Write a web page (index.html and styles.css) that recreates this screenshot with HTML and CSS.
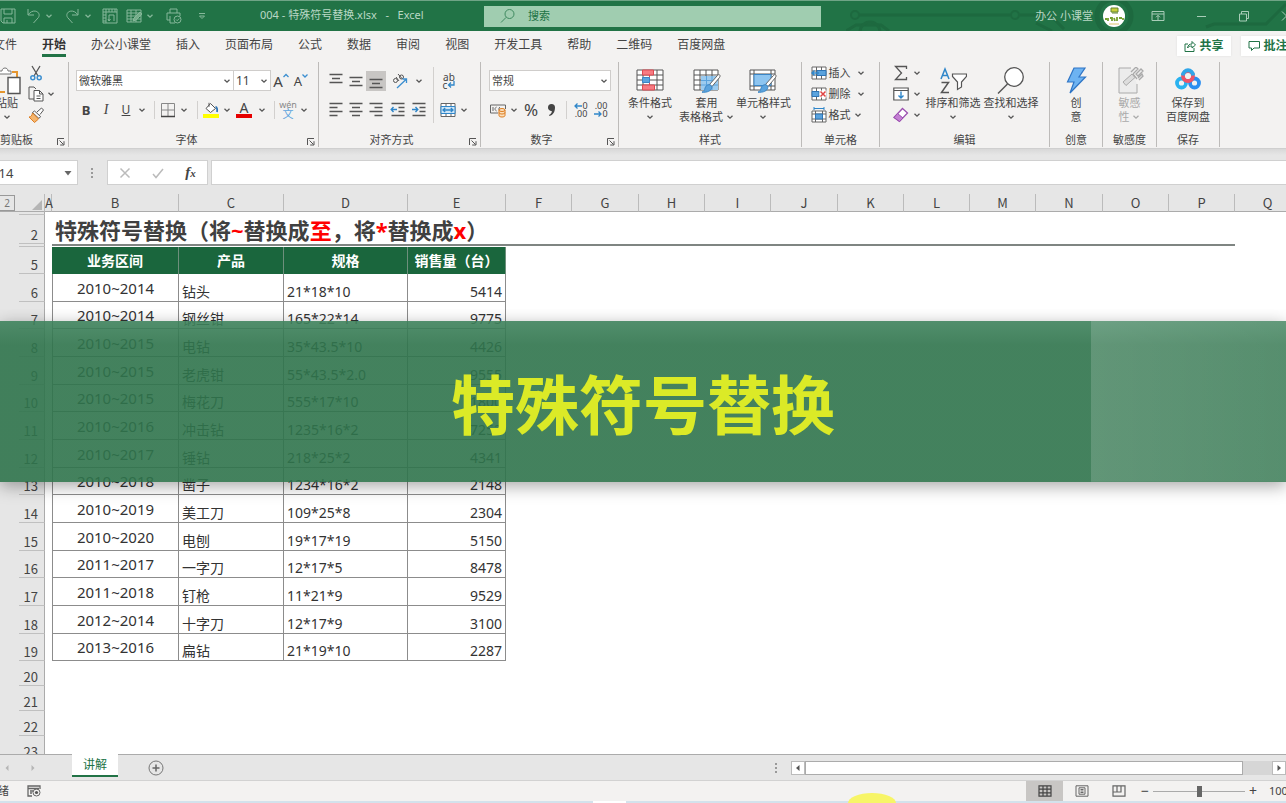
FILE: index.html
```html
<!DOCTYPE html>
<html lang="zh-CN">
<head>
<meta charset="utf-8">
<title>004 - 特殊符号替换.xlsx - Excel</title>
<link rel="stylesheet" href="styles.css">
</head>
<body>
<svg class="sprite" aria-hidden="true">
  <symbol id="chev" viewBox="0 0 8 8"><path d="M1.500 2.800 4 5.200 6.500 2.800" fill="none" stroke="currentColor" stroke-width="1.300"/></symbol>
  <symbol id="launch" viewBox="0 0 8 8"><path d="M.5 7V.5H7M2.500 2.500 6.500 6.500M7 3.200V7H3.200" fill="none" stroke="currentColor"/></symbol>
  <symbol id="brush" viewBox="0 0 20 20"><path d="M18.500.8c1 .8.5 2-.2 3L11 12.500 8.500 10.500 16 2c.8-1 1.700-1.800 2.500-1.200Z" fill="#fff" stroke="#666"/><path d="M8.300 10.700c1.600.2 2.800 1.400 2.500 3-.4 3-4.500 5-9.800 4.500 2-1 2.500-2 3-4 .5-2 2.200-3.600 4.300-3.500Z" fill="#5ba3dd" stroke="#3b86c6"/></symbol>
</svg>

<header class="titlebar">
  <svg class="circuit" viewBox="0 0 440 30" aria-hidden="true"><g fill="none" stroke="#1d693f" stroke-width="3"><path d="M12 14h152M174 14h30l14 14M0 30l10-6h25l8 6M360 26l8-3h52l20-20M190 22l16 8"/><circle cx="9" cy="14" r="4" stroke-width="2"/><circle cx="169" cy="14" r="4" stroke-width="2"/><circle cx="24" cy="31" r="10"/><circle cx="268" cy="15" r="17" stroke-width="5"/></g></svg>
  <div class="quick">
    <button class="w16" aria-label="保存"><svg viewBox="0 0 16 16"><path d="M1 1h14v14H3l-2-2ZM4 1v5h8V1M4 15v-5h8v5M7 12v3"/></svg></button>
    <button class="w20 undo" aria-label="撤销"><svg viewBox="0 0 16 16"><path d="M2 1v6h6M2.300 6.700C4 4 7 2.500 9.800 3.200c3 .8 4.300 3.800 2.600 6.300L7.500 15"/></svg></button>
    <button class="w12" aria-label="撤销列表"><svg class="c"><use href="#chev"/></svg></button>
    <button class="w20 redo" aria-label="恢复"><svg viewBox="0 0 16 16"><path d="M14 1v6H8M13.700 6.700C12 4 9 2.500 6.200 3.200c-3 .8-4.300 3.800-2.600 6.300L8.500 15"/></svg></button>
    <button class="w12" aria-label="恢复列表"><svg class="c"><use href="#chev"/></svg></button>
    <button class="w24" aria-label="表格"><svg viewBox="0 0 16 16"><path d="M1 1h14v14H1ZM1 4h14M4 1v14M7 1v3M10 1v3M13 1v3M1 7h3M1 10h3M1 13h3M7 13l-1-2M7 13l1.500-2M7 13V7h5M12 7v6"/></svg></button>
    <button class="w20" aria-label="编辑表格"><svg viewBox="0 0 16 16"><path d="M1 2h14v12H1ZM1 5h14M1 8h14M1 11h14M5 2v12M10 2v12"/><path d="m7 13 1-3 6-6 2 2-6 6Z" fill="#75ad8a"/></svg></button>
    <button class="w12" aria-label="编辑列表"><svg class="c"><use href="#chev"/></svg></button>
    <button class="w28" aria-label="打印预览"><svg viewBox="0 0 16 16"><path d="M4 5V1h7v4M4 12H1V5h13v3M4 8v7h5"/><circle cx="11.500" cy="11.500" r="3.500"/><path d="m10 11.500 1.200 1.200 2-2.200"/></svg></button>
    <button class="w24" aria-label="自定义快速访问工具栏"><svg class="s8" viewBox="0 0 8 8"><path d="M1 1.500h6M1.500 4h5L4 6.500Z"/></svg></button>
  </div>
  <h1 class="doc-title">004 - 特殊符号替换.xlsx&nbsp;&nbsp; -&nbsp;&nbsp; Excel</h1>
  <label class="search"><svg viewBox="0 0 16 16"><circle cx="9.500" cy="6" r="4.500"/><path d="M6.200 9.300 1 14.500"/></svg><input type="search" placeholder="搜索" aria-label="搜索"></label>
  <div class="account">
    <span>办公 小课堂</span>
    <svg class="avatar" viewBox="0 0 22 22"><circle cx="11" cy="11" r="11" fill="#fff"/><path d="M8 3h7v4H8ZM9 8h6" fill="#c8cf3c" stroke="#62842f"/><path d="M2 14h2m1-1v3m2-3h2v3m2-3 1 3m2-4v4m2-3h3m1 0v2" stroke="#76a02e" stroke-width="1.800" fill="none"/><path d="M6 19h10" stroke="#dcc36a"/></svg>
    <button class="win" aria-label="功能区显示选项"><svg viewBox="0 0 14 12"><path d="M1 1.500h12v9H1ZM1 4h12M7 10V5.500M5 7.300 7 5.300l2 2"/></svg></button>
    <button class="win" aria-label="最小化"><svg viewBox="0 0 14 12"><path d="M3 6.500h9"/></svg></button>
    <button class="win" aria-label="向下还原"><svg viewBox="0 0 14 12"><path d="M2.500 4h7v7h-7ZM4.500 4V1.500h7v7h-2"/></svg></button>
    <button class="win" aria-label="关闭"><svg viewBox="0 0 14 12"><path d="m2 1.500 9 9M11 1.500l-9 9"/></svg></button>
  </div>
</header>

<nav class="tabs">
  <a href="#">文件</a><a href="#" class="on">开始</a><a href="#">办公小课堂</a><a href="#">插入</a><a href="#">页面布局</a><a href="#">公式</a><a href="#">数据</a><a href="#">审阅</a><a href="#">视图</a><a href="#">开发工具</a><a href="#">帮助</a><a href="#">二维码</a><a href="#">百度网盘</a>
  <div class="share">
    <button><svg viewBox="0 0 12 12"><path d="M4 4H1v7.500h9V8M3.500 8c.5-3 2-4 4.500-4V1.500L11.500 5 8 8V6C6 6 4.500 6.500 3.500 8Z"/></svg>共享</button>
    <button><svg viewBox="0 0 12 12"><path d="M1 1.500h10.500v6.500H6L3.500 10.500V8H1Z"/></svg>批注</button>
  </div>
</nav>

<section class="ribbon">
  <div class="group g-clip">
    <div class="body">
      <button class="big paste"><svg class="i28" viewBox="0 0 28 28"><path d="M5 5H1v20h11M19 5h5v5" fill="none" stroke="#e5962f" stroke-width="2"/><path d="M6 7V4h3c0-4 6-4 6 0h3v3Z" fill="#fff" stroke="#777"/><path d="M15 10.500h12v16H15Z" fill="#fff" stroke="#555" stroke-width="1.400"/></svg><span>粘贴</span><svg class="c"><use href="#chev"/></svg></button>
      <div class="stack">
        <div class="row"><button class="w16" aria-label="剪切"><svg viewBox="0 0 16 16"><path d="m4 1 6 10M12 1 6 11" fill="none" stroke="#555" stroke-width="1.300"/><g fill="none" stroke="#3c8fd0" stroke-width="1.500"><circle cx="4.800" cy="12.800" r="2"/><circle cx="11.200" cy="12.800" r="2"/></g></svg></button></div>
        <div class="row"><button class="w16" aria-label="复制"><svg viewBox="0 0 16 16"><path d="M6 13H1V1h5l2 2" fill="none" stroke="#555"/><path d="M6 4.500h5.500L15 8v7H6ZM11.500 4.500V8H15M8.500 10h4M8.500 12.500h4" fill="#fff" stroke="#555"/></svg></button><button class="w14" aria-label="复制选项"><svg class="c"><use href="#chev"/></svg></button></div>
        <div class="row"><button class="w16" aria-label="格式刷"><svg viewBox="0 0 16 16"><path d="m9 5 4.500-4L15.500 3 12 7.500" fill="#fff" stroke="#555"/><path d="m6.500 4 6 5.500-1.500 2L4.500 5.500Z" fill="#fff" stroke="#555"/><path d="m4.500 6 6 6-4 3.500L1 10c2 0 3-1.500 3.500-4Z" fill="#f5b56d" stroke="#dd7d20"/></svg></button></div>
      </div>
    </div>
    <h2>剪贴板</h2><button class="launch" aria-label="剪贴板设置"><svg><use href="#launch"/></svg></button>
  </div>

  <div class="group g-font">
    <div class="body lines">
      <div class="row">
        <label class="combo font-name"><select aria-label="字体"><option>微软雅黑</option></select><svg class="c"><use href="#chev"/></svg></label>
        <label class="combo font-size"><select aria-label="字号"><option>11</option></select><svg class="c"><use href="#chev"/></svg></label>
        <button class="w20 grow" aria-label="增大字号"><span class="l15">A</span><svg class="s6" viewBox="0 0 6 6"><path d="M.5 4 3 1.500 5.500 4" stroke="#3c8fd0" fill="none" stroke-width="1.300"/></svg></button>
        <button class="w20 grow" aria-label="减小字号"><span class="l13">A</span><svg class="s6" viewBox="0 0 6 6"><path d="M.5 1.500 3 4 5.500 1.500" stroke="#3c8fd0" fill="none" stroke-width="1.300"/></svg></button>
      </div>
      <div class="row">
        <button class="w20 bold">B</button><button class="w20 italic">I</button><button class="w20 under">U</button><button class="w12" aria-label="下划线选项"><svg class="c"><use href="#chev"/></svg></button><i class="sep w12"></i>
        <button class="w16" aria-label="边框"><svg viewBox="0 0 16 16"><path d="M1.500 1.500h13v13M1.500 1.500v13M8 1.500v13M1.500 8h13" fill="none" stroke="#888"/><path d="M1 14.500h14" stroke="#444" stroke-width="1.500"/></svg></button><button class="w16" aria-label="边框选项"><svg class="c"><use href="#chev"/></svg></button><i class="sep w10"></i>
        <button class="w18" aria-label="填充颜色"><svg viewBox="0 0 16 16"><path d="m7.500 1.500 5 5-5 4-4.500-4ZM6 .8v4" fill="#fff" stroke="#555"/><path d="M12.500 5c1.500 0 2 2 1.500 5" stroke="#2f75b5" stroke-width="1.800" fill="none"/><path d="M0 12h16v4H0Z" fill="#ffff00"/></svg></button><button class="w14" aria-label="填充选项"><svg class="c"><use href="#chev"/></svg></button>
        <button class="w20 fcolor" aria-label="字体颜色"><span>A</span></button><button class="w16" aria-label="字体颜色选项"><svg class="c"><use href="#chev"/></svg></button><i class="sep w8"></i>
        <button class="w20 pinyin" aria-label="显示拼音"><span>wén</span><b>文</b></button><button class="w12" aria-label="拼音选项"><svg class="c"><use href="#chev"/></svg></button>
      </div>
    </div>
    <h2>字体</h2><button class="launch" aria-label="字体设置"><svg><use href="#launch"/></svg></button>
  </div>

  <div class="group g-align">
    <div class="body">
      <div class="lines w100">
        <div class="row">
          <button class="w20" aria-label="顶端对齐"><svg viewBox="0 0 16 16"><path d="M1.500 1.500h13M4 5.500h8M1.500 9.500h13" stroke="#555" stroke-width="1.300"/></svg></button>
          <button class="w20" aria-label="垂直居中"><svg viewBox="0 0 16 16"><path d="M1.500 4.500h13M4 8.500h8M1.500 12.500h13" stroke="#555" stroke-width="1.300"/></svg></button>
          <button class="w20 pressed" aria-label="底端对齐"><svg viewBox="0 0 16 16"><path d="M1.500 6.500h13M4 10.500h8M1.500 14.500h13" stroke="#555" stroke-width="1.300"/></svg></button>
          <button class="w28" aria-label="方向"><svg viewBox="0 0 16 16"><g fill="none" stroke="#555"><circle cx="3.500" cy="7.500" r="2"/><path d="m4 4 3 4M6 1l4.500 5"/><circle cx="9.500" cy="4" r="2"/></g><path d="M5 15 14.500 6M10.500 6h4v4" stroke="#3c8fd0" stroke-width="1.300" fill="none"/></svg></button><button class="w10" aria-label="方向选项"><svg class="c"><use href="#chev"/></svg></button>
        </div>
        <div class="row">
          <button class="w20" aria-label="左对齐"><svg viewBox="0 0 16 16"><path d="M1.500 1.500h13M1.500 5.500h8M1.500 9.500h13M1.500 13.500h8" stroke="#555" stroke-width="1.300"/></svg></button>
          <button class="w20" aria-label="居中"><svg viewBox="0 0 16 16"><path d="M1.500 1.500h13M4 5.500h8M1.500 9.500h13M4 13.500h8" stroke="#555" stroke-width="1.300"/></svg></button>
          <button class="w20" aria-label="右对齐"><svg viewBox="0 0 16 16"><path d="M1.500 1.500h13M6.500 5.500h8M1.500 9.500h13M6.500 13.500h8" stroke="#555" stroke-width="1.300"/></svg></button>
          <button class="w24" aria-label="减少缩进量"><svg viewBox="0 0 16 16"><path d="M1.500 1.500h13M8.500 5.500h6M8.500 9.500h6M1.500 13.500h13" stroke="#555" stroke-width="1.300"/><path d="M7 7.500H1.500M3.500 5l-2.300 2.500 2.300 2.500" stroke="#2f86c9" stroke-width="1.400" fill="none"/></svg></button>
          <button class="w18" aria-label="增加缩进量"><svg viewBox="0 0 16 16"><path d="M1.500 1.500h13M8.500 5.500h6M8.500 9.500h6M1.500 13.500h13" stroke="#555" stroke-width="1.300"/><path d="M1 7.500h5.500M4.500 5l2.300 2.500-2.300 2.500" stroke="#2f86c9" stroke-width="1.400" fill="none"/></svg></button>
        </div>
      </div>
      <i class="sep tall w14"></i>
      <div class="lines">
        <div class="row"><button class="w18 wrap" aria-label="自动换行"><span>ab</span><span>c<svg viewBox="0 0 8 8"><path d="M7 0v4H1.500M4 1.500 1.500 4 4 6.500" fill="none" stroke="#2f86c9" stroke-width="1.300"/></svg></span></button></div>
        <div class="row"><button class="w16" aria-label="合并后居中"><svg viewBox="0 0 16 16"><path d="M1 1.500h14v13H1ZM6 1.500v3M11 1.500v3M6 11.500v3M11 11.500v3" fill="#fff" stroke="#666"/><path d="M1 4.500h14v7H1Z" fill="#cfe6f7" stroke="#2f86c9"/><path d="M3 8h10M5.200 6 3 8l2.200 2M10.800 6 13 8l-2.200 2" stroke="#2f86c9" fill="none" stroke-width="1.300"/></svg></button><button class="w16" aria-label="合并选项"><svg class="c"><use href="#chev"/></svg></button></div>
      </div>
    </div>
    <h2>对齐方式</h2><button class="launch" aria-label="对齐设置"><svg><use href="#launch"/></svg></button>
  </div>

  <div class="group g-num">
    <div class="body lines">
      <div class="row"><label class="combo num-format"><select aria-label="数字格式"><option>常规</option></select><svg class="c"><use href="#chev"/></svg></label></div>
      <div class="row">
        <button class="w18" aria-label="会计数字格式"><svg viewBox="0 0 16 16"><path d="M8 11H.5V3h15v4M3 5v4M6.500 5C4.500 6 4.500 8 6.500 9M10 5c-1.500 1-1.500 3 0 4" fill="none" stroke="#666"/><g fill="#fbe0bd" stroke="#dd7d20"><path d="M9 8v5.500c0 2 6 2 6 0V8"/><ellipse cx="12" cy="8" rx="3" ry="1.500"/><path d="M9 10.500c0 2 6 2 6 0" fill="none"/></g></svg></button><button class="w14" aria-label="会计格式选项"><svg class="c"><use href="#chev"/></svg></button>
        <button class="w20 pct">%</button><button class="w20" aria-label="千位分隔样式"><svg viewBox="0 0 16 16"><path d="M5 5.500a3.500 3.500 0 1 1 7 0c0 4.500-2 7.500-5.500 8.500L6 13c2-1 2.900-2.300 2.800-4A3.400 3.400 0 0 1 5 5.500Z" fill="#444"/></svg></button><i class="sep w10"></i>
        <button class="w20 dec" aria-label="增加小数位数"><span><svg viewBox="0 0 8 6"><path d="M8 3H1M3.500.5 1 3l2.500 2.500" fill="none" stroke="#2f86c9" stroke-width="1.300"/></svg>0</span><span>.00</span></button>
        <button class="w20 dec" aria-label="减少小数位数"><span>.00</span><span><svg viewBox="0 0 8 6"><path d="M0 3h7M4.500.5 7 3 4.500 5.500" fill="none" stroke="#2f86c9" stroke-width="1.300"/></svg>0</span></button>
      </div>
    </div>
    <h2>数字</h2><button class="launch" aria-label="数字设置"><svg><use href="#launch"/></svg></button>
  </div>

  <div class="group g-style">
    <div class="body">
      <button class="big"><svg class="i28" viewBox="0 0 28 28"><path d="M1 3h26v20H1ZM1 8h26M1 13h26M1 18h26M7 3v20M21 3v20" fill="#fff" stroke="#555"/><path d="M6.500 3h11v5h-11ZM6.500 18h12v5h-12Z" fill="#f77b82" stroke="#df4a52"/><path d="M13.500 8v10" stroke="#df4a52"/><path d="M6.500 10.500h7v5h-7Z" fill="#5ba3dd" stroke="#3b86c6"/></svg><span>条件格式</span><svg class="c"><use href="#chev"/></svg></button>
      <button class="big"><svg class="i28" viewBox="0 0 28 28"><path d="M1 3h24v20H1ZM1 8h24M1 13h24M1 18h24M7 3v20M13 3v20M19 3v20" fill="#fff" stroke="#555"/><path d="M8 9h17v14H8Z" fill="#9ccbef"/><path d="M8 13.500h17M8 18h17M13.500 9v14M19 9v14" stroke="#5ba3dd"/><use href="#brush" x="8" y="7" width="20" height="20"/></svg><span>套用</span><span>表格格式 <svg class="c"><use href="#chev"/></svg></span></button>
      <button class="big"><svg class="i28" viewBox="0 0 28 28"><path d="M1 3h25v20H1ZM1 7h25M1 19h25M5 3v20M22 3v20" fill="#fff" stroke="#555"/><path d="M5 7.500h17v11H5Z" fill="#8ec5f0" stroke="#3b86c6"/><use href="#brush" x="8" y="7" width="20" height="20"/></svg><span>单元格样式</span><svg class="c"><use href="#chev"/></svg></button>
    </div>
    <h2>样式</h2>
  </div>

  <div class="group g-cells">
    <div class="body"><div class="stack">
      <div class="row"><button class="cmd"><svg viewBox="0 0 16 16"><path d="M1 2h14v12H1ZM1 6h14M1 10h14M5.500 2v12M10.500 2v12" fill="#fff" stroke="#666"/><path d="M6 5.500h9v5H6Z" fill="#5ba3dd" stroke="#2f75b5"/><path d="M8 8H1M3.500 5.500 1 8l2.500 2.500" fill="none" stroke="#2f86c9" stroke-width="1.400"/></svg>插入</button><button class="w20" aria-label="插入选项"><svg class="c"><use href="#chev"/></svg></button></div>
      <div class="row"><button class="cmd"><svg viewBox="0 0 16 16"><path d="M1 2h14v12H1ZM1 6h14M1 10h14M5.500 2v12M10.500 2v12" fill="#fff" stroke="#666"/><path d="M1 5.500h7v5H1Z" fill="#5ba3dd" stroke="#2f75b5"/><path d="M8.500 4.500h7v7h-7Z" fill="#fff"/><path d="m9.500 5.500 5 5M14.500 5.500l-5 5" stroke="#e04343" stroke-width="1.500"/></svg>删除</button><button class="w20" aria-label="删除选项"><svg class="c"><use href="#chev"/></svg></button></div>
      <div class="row"><button class="cmd"><svg viewBox="0 0 16 16"><path d="M1 4h14v11H1ZM1 7h14M1 12h14M4.500 4v11M11.500 4v11" fill="#fff" stroke="#666"/><path d="M4.500 7h7v5h-7Z" fill="#5ba3dd" stroke="#2f75b5"/><path d="M3 1.500h10M3 0v3M13 0v3" stroke="#2f86c9"/></svg>格式</button><button class="w14" aria-label="格式选项"><svg class="c"><use href="#chev"/></svg></button></div>
    </div></div>
    <h2>单元格</h2>
  </div>

  <div class="group g-edit">
    <div class="body"><div class="stack">
      <div class="row"><button class="w20" aria-label="自动求和"><svg viewBox="0 0 16 16"><path d="M13.500 4V1.500h-11L8.500 8l-6 6.500h11V12" fill="none" stroke="#555" stroke-width="1.300"/></svg></button><button class="w12" aria-label="求和选项"><svg class="c"><use href="#chev"/></svg></button></div>
      <div class="row"><button class="w20" aria-label="填充"><svg viewBox="0 0 16 16"><path d="M.8 2h14.400v12H.8ZM.8 4.500h14.400" fill="#fff" stroke="#555" stroke-width="1.200"/><path d="M8 5.500v6.500M5.500 9.500 8 12l2.500-2.500" fill="none" stroke="#2f86c9" stroke-width="1.400"/></svg></button><button class="w12" aria-label="填充选项"><svg class="c"><use href="#chev"/></svg></button></div>
      <div class="row"><button class="w20" aria-label="清除"><svg viewBox="0 0 16 16"><path d="m9.500 1.500 5 4.500-8 8.500-5.500-4Z" fill="#fff" stroke="#9b4fb0" stroke-width="1.300"/><path d="m4.500 6.500 5.500 4.500-3.500 3.500L1 10.500Z" fill="#c37fd3" stroke="#9b4fb0"/></svg></button><button class="w12" aria-label="清除选项"><svg class="c"><use href="#chev"/></svg></button></div>
    </div>
      <button class="big"><svg class="i28" viewBox="0 0 28 28"><path d="M2 12 6 2l4 10M3.500 8.500h5" fill="none" stroke="#2f86c9" stroke-width="1.500"/><path d="M2.500 15.500h7l-7 10h7.500" fill="none" stroke="#555" stroke-width="1.500"/><path d="M13.500 7h14v2.500L22.500 15v5l-4 2.500V15l-5-5.500Z" fill="#fff" stroke="#555" stroke-width="1.200"/></svg><span>排序和筛选</span><svg class="c"><use href="#chev"/></svg></button>
      <button class="big"><svg class="i28" viewBox="0 0 28 28"><circle cx="17" cy="10" r="9.300" fill="#fff" stroke="#555" stroke-width="1.300"/><path d="M10.500 17 1 26.500" stroke="#555" stroke-width="1.500"/></svg><span>查找和选择</span><svg class="c"><use href="#chev"/></svg></button>
    </div>
    <h2>编辑</h2>
  </div>

  <div class="group g-idea">
    <div class="body"><button class="big"><svg class="i28" viewBox="0 0 28 28"><path d="M12 1h11l-6 9h6.500L8 26l4-11H5.500Z" fill="#6db3f2" stroke="#2f75c5" stroke-width="1.200"/></svg><span>创</span><span>意</span></button></div>
    <h2>创意</h2>
  </div>
  <div class="group g-sens">
    <div class="body"><button class="big" disabled><svg class="i28" viewBox="0 0 28 28"><path d="M15 1H3v25h18v-9" fill="#ececec" stroke="#aaa"/><path d="m7 15 9-8 3 3.500-9 8Z" fill="#ddd" stroke="#aaa"/><path d="m20 7 5-5 2 2-5 5ZM15 5l5-5 2 2-5 5M22 11l4-4 1 2-4 4M17 7l4 5" fill="#ececec" stroke="#aaa" stroke-width="1.300"/></svg><span>敏感</span><span>性 <svg class="c"><use href="#chev"/></svg></span></button></div>
    <h2>敏感度</h2>
  </div>
  <div class="group g-save">
    <div class="body"><button class="big"><svg class="i28" viewBox="0 0 28 28"><g fill="none" stroke-width="3.800"><circle cx="7.500" cy="16" r="4.500" stroke="#29b2ef"/><circle cx="20.500" cy="16" r="4.500" stroke="#2b8ef0"/><circle cx="14" cy="9" r="5" stroke="#ef5467"/><path d="M8.800 8.500C9.500 1.500 18.500 1.500 19.200 8.500" stroke="#2fa6ea"/></g></svg><span>保存到</span><span>百度网盘</span></button></div>
    <h2>保存</h2>
  </div>
</section>

<section class="formula">
  <label class="namebox"><input type="text" value="J14" aria-label="名称框"><svg viewBox="0 0 8 8"><path d="M.5 2h7L4 6.500Z" fill="#666"/></svg></label>
  <span class="dots"></span>
  <div class="fx">
    <button aria-label="取消"><svg viewBox="0 0 12 12"><path d="m1.500 1.500 9 9M10.500 1.500l-9 9" stroke="#bbb" stroke-width="1.500"/></svg></button>
    <button aria-label="输入"><svg viewBox="0 0 12 12"><path d="m1 7 3 3.500L11 2" fill="none" stroke="#bbb" stroke-width="1.500"/></svg></button>
    <button class="fn">f<small>x</small></button>
  </div>
  <input class="fbar" type="text" aria-label="编辑栏">
</section>

<main class="sheet">
<table>
  <colgroup><col class="cg"><col class="cn"><col class="ca"><col class="cb"><col class="cc"><col class="cd"><col class="ce"><col class="cx"><col class="cy"><col class="cx"><col class="cx"><col class="cy"><col class="cx"><col class="cx"><col class="cx"><col class="cy"><col class="cx"><col class="cx"><col class="cx"></colgroup>
  <thead><tr><td class="level"><button>2</button></td><td class="corner"><svg viewBox="0 0 10 10"><path d="M10 0v10H0Z" fill="#b5b5b5"/></svg></td><th>A</th><th>B</th><th>C</th><th>D</th><th>E</th><th>F</th><th>G</th><th>H</th><th>I</th><th>J</th><th>K</th><th>L</th><th>M</th><th>N</th><th>O</th><th>P</th><th>Q</th></tr></thead>
  <tbody class="top">
    <tr class="thin"><td rowspan="4" class="gutter"></td><th></th></tr>
    <tr class="title"><th>2</th><td></td><td colspan="15">特殊符号替换（将<em>~</em>替换成<em>至</em>，将<em>*</em>替换成<em>x</em>）</td></tr>
    <tr class="thin rule"><th></th><td></td><td colspan="15"></td></tr>
    <tr class="heads"><th>5</th><td></td><td>业务区间</td><td>产品</td><td>规格</td><td>销售量（台）</td></tr>
  </tbody>
  <tbody class="data">
    <tr><td class="gutter"></td><th>6</th><td></td><td class="span">2010~2014</td><td>钻头</td><td>21*18*10</td><td class="num">5414</td></tr>
    <tr><td class="gutter"></td><th>7</th><td></td><td class="span">2010~2014</td><td>钢丝钳</td><td>165*22*14</td><td class="num">9775</td></tr>
    <tr><td class="gutter"></td><th>8</th><td></td><td class="span">2010~2015</td><td>电钻</td><td>35*43.5*10</td><td class="num">4426</td></tr>
    <tr><td class="gutter"></td><th>9</th><td></td><td class="span">2010~2015</td><td>老虎钳</td><td>55*43.5*2.0</td><td class="num">9555</td></tr>
    <tr><td class="gutter"></td><th>10</th><td></td><td class="span">2010~2015</td><td>梅花刀</td><td>555*17*10</td><td class="num">1800</td></tr>
    <tr><td class="gutter"></td><th>11</th><td></td><td class="span">2010~2016</td><td>冲击钻</td><td>1235*16*2</td><td class="num">7252</td></tr>
    <tr><td class="gutter"></td><th>12</th><td></td><td class="span">2010~2017</td><td>锤钻</td><td>218*25*2</td><td class="num">4341</td></tr>
    <tr><td class="gutter"></td><th>13</th><td></td><td class="span">2010~2018</td><td>凿子</td><td>1234*16*2</td><td class="num">2148</td></tr>
    <tr><td class="gutter"></td><th>14</th><td></td><td class="span">2010~2019</td><td>美工刀</td><td>109*25*8</td><td class="num">2304</td></tr>
    <tr><td class="gutter"></td><th>15</th><td></td><td class="span">2010~2020</td><td>电刨</td><td>19*17*19</td><td class="num">5150</td></tr>
    <tr><td class="gutter"></td><th>16</th><td></td><td class="span">2011~2017</td><td>一字刀</td><td>12*17*5</td><td class="num">8478</td></tr>
    <tr><td class="gutter"></td><th>17</th><td></td><td class="span">2011~2018</td><td>钉枪</td><td>11*21*9</td><td class="num">9529</td></tr>
    <tr><td class="gutter"></td><th>18</th><td></td><td class="span">2012~2014</td><td>十字刀</td><td>12*17*9</td><td class="num">3100</td></tr>
    <tr><td class="gutter"></td><th>19</th><td></td><td class="span">2013~2016</td><td>扁钻</td><td>21*19*10</td><td class="num">2287</td></tr>
  </tbody>
  <tbody class="blank">
    <tr><td class="gutter" rowspan="4"></td><th>20</th></tr><tr><th>21</th></tr><tr><th>22</th></tr><tr><th>23</th></tr>
  </tbody>
</table>
</main>

<section class="sheetbar">
  <button class="nav" aria-label="上一张"><svg viewBox="0 0 8 8"><path d="M5.500 1v6L2.500 4Z" fill="#b5b5b5"/></svg></button>
  <button class="nav" aria-label="下一张"><svg viewBox="0 0 8 8"><path d="M2.500 1v6l3-3Z" fill="#b5b5b5"/></svg></button>
  <a class="sheettab" href="#">讲解</a>
  <button class="add" aria-label="新工作表"><svg viewBox="0 0 16 16"><circle cx="8" cy="8" r="7" fill="none" stroke="#777"/><path d="M8 4.500v7M4.500 8h7" stroke="#666" stroke-width="1.500"/></svg></button>
  <span class="dots"></span>
  <div class="hscroll"><button aria-label="向左滚动"><svg viewBox="0 0 8 8"><path d="M5.500 1v6L2 4Z" fill="#555"/></svg></button><span class="thumb"></span><button class="right" aria-label="向右滚动"><svg viewBox="0 0 8 8"><path d="M2.500 1v6L6 4Z" fill="#555"/></svg></button></div>
</section>

<footer class="status">
  <span class="ready">就绪</span>
  <svg class="macro" viewBox="0 0 14 12"><path d="M5 11H1V1h12v3M1 3.500h11M3 6h3M3 8h2" fill="none" stroke="#666" stroke-width="1.300"/><circle cx="9.500" cy="7.500" r="3.500" fill="none" stroke="#666"/><circle cx="9.500" cy="7.500" r="1.600" fill="#555"/></svg>
  <div class="views">
    <button class="on" aria-label="普通"><svg viewBox="0 0 14 12"><path d="M1 .8h12v10.400H1ZM1 4.200h12M1 7.800h12M5 .8v10.400M9 .8v10.400" fill="none" stroke="#444" stroke-width="1.200"/></svg></button>
    <button aria-label="页面布局"><svg viewBox="0 0 14 12"><path d="M1 .8h12v10.400H1ZM4 2.800h6v6.400H4ZM5.500 4.500h3M5.500 6h3M5.500 7.500h3" fill="none" stroke="#666"/></svg></button>
    <button aria-label="分页预览"><svg viewBox="0 0 14 12"><path d="M1 .8h12v10.400H1ZM1 7h8V.8M5 .8V7" fill="none" stroke="#666" stroke-width="1.200"/></svg></button>
  </div>
  <button class="zoom">−</button><input type="range" min="10" max="190" value="100" aria-label="显示比例"><button class="zoom">+</button>
  <span class="percent">100%</span>
  <span class="glow"></span>
</footer>
<div class="edge"></div>

<div class="banner"><strong>特殊符号替换</strong></div>
</body>
</html>
```

FILE: styles.css
```css
* { box-sizing: border-box; }
body {
  margin: 0;
  height: 100vh;
  position: relative;
  display: flex;
  flex-direction: column;
  overflow: hidden;
  background: #e6e6e6;
  color: #444;
  font: 11px/14px "Noto Sans", "Noto Sans CJK SC", sans-serif;
}
button, input, select { font: inherit; color: inherit; margin: 0; }
button {
  display: flex;
  align-items: center;
  justify-content: center;
  flex: none;
  padding: 0;
  border: 0;
  background: none;
}
a { color: inherit; text-decoration: none; }
h1, h2 { margin: 0; font: inherit; white-space: nowrap; }
.sprite { position: absolute; width: 0; height: 0; }
svg { width: 16px; height: 16px; flex: none; }
svg.c { width: 8px; height: 8px; color: #555; }
.w8 { width: 8px; } .w10 { width: 10px; } .w12 { width: 12px; } .w14 { width: 14px; }
.w16 { width: 16px; } .w18 { width: 18px; } .w20 { width: 20px; } .w24 { width: 24px; }
.w28 { width: 28px; } .w100 { width: 100px; }

/* title bar */
.titlebar {
  position: relative;
  display: flex;
  align-items: center;
  flex: none;
  height: 31px;
  background: #217346;
  border-top: 1px solid #6fa486;
  color: #b9d8c5;
}
.titlebar svg { fill: none; stroke: #86b89a; }
.titlebar svg.c { color: #86b89a; stroke: none; }
.titlebar .circuit { position: absolute; right: 0; top: 0; width: 440px; height: 30px; overflow: hidden; stroke: none; }
.quick { display: flex; width: 260px; height: 20px; gap: 2px; }
.quick .undo { padding-left: 2px; margin-left: 5px; }
.quick .redo { margin-left: 3px; }
.quick .w12 { padding-right: 4px; }
.quick .s8 { width: 8px; height: 8px; }
.doc-title { width: 224px; padding-bottom: 3px; }
.search {
  display: flex;
  align-items: center;
  width: 337px;
  height: 21px;
  padding-left: 16px;
  gap: 12px;
  background: #a0cdb0;
  color: #217346;
}
.search svg { stroke: #3f8a60; }
.search input { flex: 1; min-width: 0; padding: 0; border: 0; background: none; outline: 0; }
.search input::placeholder { color: #217346; opacity: 1; }
.account { position: relative; display: flex; align-items: center; margin-left: auto; margin-right: -22px; }
.account .avatar { width: 22px; height: 22px; margin: 0 11px 0 10px; stroke: none; }
.win { width: 43px; height: 30px; }
.win svg { width: 14px; height: 12px; stroke: #a9cdb8; }

/* tab strip */
.tabs {
  display: flex;
  flex: none;
  gap: 25px;
  height: 31px;
  margin-left: -7px;
  background: #f3f2f1;
  font-size: 12px;
}
.tabs a { height: 26px; padding-top: 7px; white-space: nowrap; }
.tabs .on { font-weight: bold; color: #333; border-bottom: 3px solid #217346; }
.share { display: flex; gap: 10px; margin: 5px -9px 0 auto; }
.share button { width: 54px; height: 20px; gap: 3px; background: #fff; color: #217346; font-weight: bold; box-shadow: 0 0 2px #ddd; }
.share svg { width: 12px; height: 12px; fill: none; stroke: #217346; }

/* ribbon */
.ribbon {
  display: flex;
  flex: none;
  height: 87px;
  padding-bottom: 1px;
  background: #f3f2f1;
  border-bottom: 1px solid #cfcfcf;
}
.group {
  position: relative;
  display: flex;
  flex-direction: column;
  justify-content: space-between;
  flex: none;
  border-right: 1px solid #bdbbb9;
}
.group h2 { text-align: center; }
.g-clip { width: 69px; }
.g-clip h2 { text-align: left; }
.g-font { width: 250px; }
.g-font h2 { padding-right: 14px; }
.g-align { width: 162px; }
.g-align h2 { padding-right: 16px; }
.g-num { width: 138px; }
.g-num h2 { padding-right: 16px; }
.g-style { width: 183px; }
.g-cells { width: 78px; }
.g-edit { width: 170px; }
.g-idea { width: 53px; }
.g-sens { width: 54px; }
.g-save { width: 63px; }
.launch { position: absolute; right: 3px; bottom: 1px; }
.launch svg { width: 8px; height: 8px; color: #555; }
.body { display: flex; justify-content: center; }
.row { display: flex; align-items: center; }
.row > button { height: 20px; }
.stack .row { height: 21px; }
.lines { display: flex; flex-direction: column; justify-content: flex-start; gap: 8px; padding-top: 8px; }
.lines .row { height: 21px; }
.g-font .body { padding-left: 7px; }
.g-num .body { padding-left: 8px; }
.g-align .body { justify-content: flex-start; padding-left: 7px; }
.sep { height: 18px; background: linear-gradient(#d2d0ce, #d2d0ce) center / 1px 100% no-repeat; }
.sep.tall { height: 56px; margin-top: 5px; }
.big { flex-direction: column; justify-content: flex-start; min-width: 54px; padding-top: 5px; white-space: nowrap; }
.i28 { width: 28px; height: 28px; margin-bottom: 1px; }
.big > .c { margin-top: 3px; }
.big:disabled { color: #aaa; }
.big:disabled .c { color: #aaa; }
.g-clip .body { justify-content: flex-start; }
.g-clip .paste { min-width: 0; width: 30px; margin-left: -8px; }
.g-clip .stack { padding-left: 6px; }
.g-style .body { gap: 2px; padding-right: 6px; }
.g-edit .body { gap: 3px; }
.cmd { gap: 2px; }
.combo { display: flex; align-items: center; height: 21px; padding-right: 2px; background: #fff; border: 1px solid #cfcdcb; }
.combo select { flex: 1; min-width: 0; height: 19px; padding: 0 2px; border: 0; background: none; appearance: none; outline: 0; }
.font-name { width: 158px; }
.font-size { width: 37px; border-left: 0; font-size: 12px; }
.num-format { width: 122px; }
.grow { align-items: flex-start; }
.l15 { font-size: 15px; line-height: 20px; }
.l13 { font-size: 13px; line-height: 20px; }
.s6 { width: 6px; height: 6px; margin-top: 2px; }
.bold { font-weight: bold; font-size: 13px; }
.italic { font: italic 14px "Liberation Serif", serif; }
.under { font-size: 12px; text-decoration: underline; }
.fcolor span { width: 16px; height: 16px; font-size: 14px; line-height: 12px; border-bottom: 4px solid #e60000; }
.pinyin, .wrap, .dec { flex-direction: column; }
.pinyin span { font-size: 9px; line-height: 8px; color: #888; }
.pinyin b { font-size: 11px; line-height: 10px; font-weight: normal; color: #5ba3dd; }
.wrap span { font-size: 10px; line-height: 8px; display: flex; }
.wrap svg { width: 8px; height: 8px; }
.pressed { background: #c8c6c4; }
.pct { font-size: 17px; }
.dec span { display: flex; align-items: center; font-size: 9px; line-height: 8px; }
.dec svg { width: 8px; height: 6px; }

/* formula bar */
.formula {
  display: flex;
  align-items: stretch;
  flex: none;
  height: 45px;
  padding: 11px 0 9px;
  background: linear-gradient(#d8d8d8, #e6e6e6 6px);
}
.namebox { display: flex; align-items: center; width: 78px; padding-right: 5px; background: #fff; border: 1px solid #d0d0d0; border-left: 0; }
.namebox input { flex: 1; min-width: 0; margin-left: -5px; padding: 0; border: 0; background: none; font-size: 13px; outline: 0; }
.namebox svg { width: 8px; height: 8px; }
.dots { width: 2px; height: 10px; align-self: center; background: repeating-linear-gradient(#999 0 2px, transparent 2px 4px); }
.formula .dots { margin: 0 14px 0 13px; }
.fx { display: flex; width: 101px; margin-right: 3px; background: #fff; border: 1px solid #d0d0d0; }
.fx button { flex: 1; }
.fx svg { width: 12px; height: 12px; }
.fx .fn { font: italic bold 15px "Liberation Serif", serif; }
.fn small { font-size: 11px; }
.fbar { flex: 1; min-width: 0; border: 1px solid #d0d0d0; border-right: 0; background: #fff; outline: 0; }

/* worksheet */
.sheet { flex: 1; min-height: 0; overflow: hidden; background: #fff; border-bottom: 1px solid #ababab; }
table { table-layout: fixed; width: 0; border-collapse: separate; border-spacing: 0; font-size: 14px; line-height: 18px; }
th { padding: 0; font: 13px/16px "Noto Sans CJK SC", sans-serif; }
td { padding: 0; white-space: nowrap; color: #333; }
.cg { width: 19px; } .cn { width: 26px; } .ca { width: 7px; } .cb { width: 127px; }
.cc { width: 105px; } .cd { width: 124px; } .ce { width: 98px; } .cx { width: 66px; } .cy { width: 67px; }
thead th, thead td { height: 18px; background: #e6e6e6; border-bottom: 1px solid #ababab; }
thead th { border-right: 1px solid #bbb; }
.level button { width: 15px; height: 16px; border: 1px solid #999; border-left: 0; color: #777; font-size: 10px; }
.corner { text-align: right; border-right: 1px solid #bbb; }
.corner svg { display: block; width: 10px; height: 10px; margin: 4px 2px 0 auto; }
.gutter { background: #e6e6e6; }
tbody th { height: 27px; padding-right: 6px; text-align: right; vertical-align: bottom; background: #e6e6e6; border-right: 1px solid #ababab; border-bottom: 1px solid #c0c0c0; }
.thin th, .thin td { height: 3px; font-size: 0; line-height: 0; }
.title th, .title td { height: 29px; }
.title td { padding-left: 3px; font-size: 22px; line-height: 28px; font-weight: bold; color: #404040; overflow: hidden; }
.title td:nth-child(2) { padding: 0; }
.title em { font-style: normal; color: #f00; }
.rule td[colspan] { border-top: 2px solid #7f8582; }
.heads td:nth-child(n+3) { height: 27px; background: #1a663d; color: #fff; font-weight: bold; text-align: center; border-right: 1px solid #6d8f7c; }
.data th, .data td { height: 28px; }
.data tr:nth-child(3n+2) > * { height: 27px; }
.data td:nth-child(n+4) { padding: 0 3px; vertical-align: bottom; border-right: 1px solid #8c8c8c; border-bottom: 1px solid #8c8c8c; }
.data td.span { font-size: 15px; text-align: center; vertical-align: middle; border-left: 1px solid #8c8c8c; }
.data td.num { text-align: right; }
.blank th { height: 25px; }

/* sheet tabs and scroll bar */
.sheetbar { display: flex; align-items: center; flex: none; height: 26px; border-bottom: 1px solid #d2d2d2; }
.nav { width: 26px; }
.nav svg { width: 8px; height: 8px; margin-right: 12px; }
.sheettab { align-self: flex-start; width: 46px; height: 23px; margin: -1px 30px 0 20px; padding-top: 4px; text-align: center; font-size: 12px; color: #217346; background: #fff; border-bottom: 2px solid #217346; }
.sheetbar .dots { margin-left: auto; margin-right: 14px; }
.hscroll { display: flex; width: 495px; height: 14px; background: #d6d6d6; }
.hscroll button { width: 14px; background: #fff; border: 1px solid #bbb; }
.hscroll svg { width: 8px; height: 8px; }
.thumb { width: 438px; background: #fff; border: 1px solid #ababab; }
.hscroll .right { margin-left: auto; }

/* status bar */
.status { position: relative; display: flex; align-items: center; flex: none; height: 20px; background: #f3f2f1; }
.ready { margin-left: -13px; }
.macro { width: 14px; height: 12px; margin-left: 18px; }
.views { display: flex; margin-left: auto; }
.views button { width: 37px; height: 20px; }
.views .on { background: #c8c6c4; }
.views svg { width: 14px; height: 12px; }
.zoom { width: 16px; font-size: 14px; }
.status input { width: 92px; height: 16px; background: none; appearance: none; }
.status input::-webkit-slider-runnable-track { height: 1px; background: #aaa; }
.status input::-webkit-slider-thumb { appearance: none; width: 5px; height: 11px; margin-top: -5px; background: #666; }
.percent { width: 17px; margin-left: 8px; white-space: nowrap; }
.glow { position: absolute; left: 848px; bottom: -2px; width: 48px; height: 10px; border-radius: 24px 24px 0 0 / 10px 10px 0 0; background: #f7f567; }
.edge { flex: none; height: 2px; background: linear-gradient(#fff, #fff) 593px 0 / 33px 2px no-repeat, #d3e2ec; }

/* title overlay */
.banner {
  position: absolute;
  left: 0;
  right: 0;
  top: 40%;
  height: 20%;
  display: flex;
  align-items: center;
  justify-content: center;
  padding-top: 8px;
  background:
    linear-gradient(90deg, rgba(255, 255, 255, .16), rgba(255, 255, 255, .1)) right / 195px 100% no-repeat,
    linear-gradient(rgba(62, 130, 92, .9), rgba(47, 116, 76, .9) 24px);
  box-shadow: 0 4px 16px rgba(0, 0, 0, .35);
  clip-path: inset(-12px 0 -24px);
}
.banner strong { font-size: 64px; line-height: 80px; color: #dbea27; }
```
